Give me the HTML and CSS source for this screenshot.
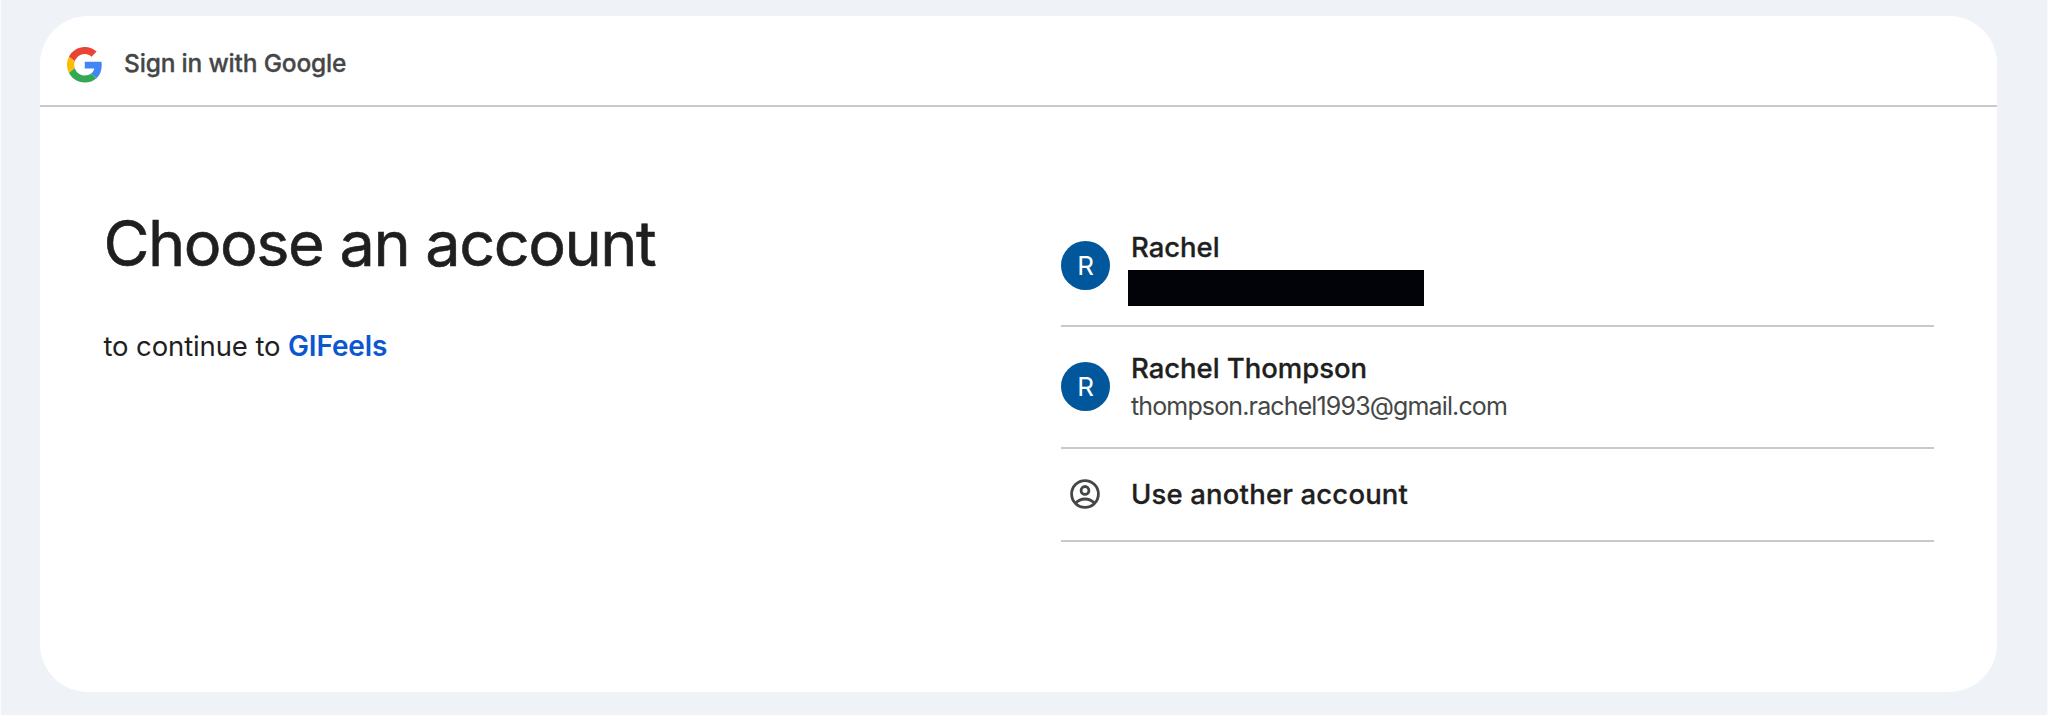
FILE: index.html
```html
<!DOCTYPE html>
<html lang="en">
<head>
<meta charset="utf-8">
<title>Sign in with Google</title>
<link rel="stylesheet" href="styles.css">
</head>
<body>
<main class="card">
  <header class="topbar">
    <svg class="logo" viewBox="0 0 48 48" aria-hidden="true">
      <path fill="#ea4335" d="M24 9.5c3.54 0 6.71 1.22 9.21 3.6l6.85-6.85C35.9 2.38 30.47 0 24 0 14.62 0 6.51 5.38 2.56 13.22l7.98 6.19C12.43 13.72 17.74 9.5 24 9.5z"/>
      <path fill="#4285f4" d="M46.98 24.55c0-1.57-.15-3.09-.38-4.55H24v9.02h12.94c-.58 2.96-2.26 5.48-4.78 7.18l7.73 6c4.51-4.18 7.09-10.36 7.09-17.65z"/>
      <path fill="#fbbc05" d="M10.53 28.59c-.48-1.45-.76-2.99-.76-4.59s.27-3.14.76-4.59l-7.98-6.19C.92 16.46 0 20.12 0 24c0 3.88.92 7.54 2.56 10.78l7.97-6.19z"/>
      <path fill="#34a853" d="M24 48c6.48 0 11.93-2.13 15.89-5.81l-7.73-6c-2.15 1.45-4.92 2.3-8.16 2.3-6.26 0-11.57-4.22-13.47-9.91l-7.98 6.19C6.51 42.62 14.62 48 24 48z"/>
    </svg>
    <span class="topbar-title">Sign in with Google</span>
  </header>
  <div class="content">
    <section class="intro">
      <h1 class="heading">Choose an account</h1>
      <p class="subtitle">to continue to <a class="app">GIFeels</a></p>
    </section>
    <ul class="accounts">
      <li class="account first">
        <span class="avatar">R</span>
        <div class="details">
          <span class="name">Rachel</span>
          <span class="redacted"></span>
        </div>
      </li>
      <li class="account second">
        <span class="avatar">R</span>
        <div class="details">
          <span class="name">Rachel Thompson</span>
          <span class="email">thompson.rachel1993@gmail.com</span>
        </div>
      </li>
      <li class="account other">
        <span class="icon-slot">
          <svg class="person" viewBox="0 0 30 30" aria-hidden="true">
            <g fill="none" stroke="#444746" stroke-width="2.8">
              <circle cx="15" cy="15" r="13.4"/>
              <circle cx="15" cy="11.4" r="3.900"/>
              <path d="M5.6 24.2C8 21.4 11.3 20 15 20s7 1.400 9.400 4.200"/>
            </g>
          </svg>
        </span>
        <span class="name">Use another account</span>
      </li>
    </ul>
  </div>
</main>
</body>
</html>
```
FILE: styles.css
```css
* { box-sizing: border-box; margin: 0; padding: 0; }
body {
  width: 2048px;
  height: 715px;
  padding: 16px 50px 23px 38.500px;
  background: #eff3f8;
  border-left: 1px solid #fafcfd;
  border-right: 1px solid #f8fafc;
  font-family: Inter, "Liberation Sans", sans-serif;
  color: #1f1f1f;
  overflow: hidden;
}
.card { height: 675.500px; background: #fff; border-radius: 48px; overflow: hidden; }
.topbar {
  display: flex;
  align-items: center;
  height: 91px;
  padding: 4px 0 0 27.500px;
  border-bottom: 2px solid #c8c9c8;
}
.logo { width: 35.500px; height: 35.500px; margin-top: 5px; }
.topbar-title { margin-left: 21.500px; font-size: 24.500px; font-weight: 500; letter-spacing: -0.18px; color: #444746; line-height: 32px; -webkit-text-stroke: 0.3px #444746; }
.content { display: flex; justify-content: space-between; padding: 0 63px 0 64px; }
.intro { padding-top: 96px; }
.heading { font-size: 63px; font-weight: 400; line-height: 80px; letter-spacing: -1.5px; white-space: nowrap; -webkit-text-stroke: 0.6px #1f1f1f; }
.subtitle { margin-top: 44px; font-size: 27.500px; line-height: 38px; letter-spacing: -0.12px; }
.app { color: #0b57d0; font-weight: 600; font-size: 28px; }
.accounts { width: 873px; padding-top: 101px; list-style: none; }
.account { display: flex; align-items: center; height: 119px; border-bottom: 2px solid #c8c9c8; }
.first { padding-bottom: 1px; }
.first .avatar { margin-bottom: 2px; }
.second { height: 121.500px; }
.other { height: 93px; }
.avatar {
  display: flex; align-items: center; justify-content: center;
  width: 49px; height: 49px; border-radius: 50%;
  background: #01579b; color: #fff; font-size: 26px;
}
.icon-slot { display: flex; justify-content: center; width: 48px; margin-right: 1px; }
.person { width: 30px; height: 30px; }
.details { display: flex; flex-direction: column; margin-left: 21px; }
.first .details { margin-top: 2px; }
.name { font-size: 27.500px; font-weight: 500; line-height: 38px; letter-spacing: -0.04px; -webkit-text-stroke: 0.3px #1f1f1f; }
.other .name { margin-left: 21px; letter-spacing: 0.17px; }
.email { font-size: 25px; line-height: 38px; letter-spacing: -0.86px; color: #444746; }
.redacted { width: 296px; height: 35.500px; margin: 4px 0 0 -3px; background: #020308; }
```
